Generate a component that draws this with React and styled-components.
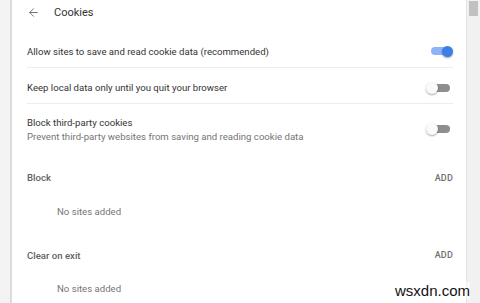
import styled, { createGlobalStyle } from "styled-components"
import { ArrowLeft } from "lucide-react"

const Global = createGlobalStyle`
  html, body { margin: 0; padding: 0; }
  *, *::before, *::after { box-sizing: border-box; }
  body {
    width: 480px;
    height: 303px;
    overflow: hidden;
    background: #f5f5f5;
    font-family: Roboto, "Liberation Sans", Arial, sans-serif;
  }
`

const Page = styled.div`
  position: relative;
  display: flex;
  width: 480px;
  height: 303px;
  overflow: hidden;
`

const Gutter = styled.div`
  width: 12px;
  flex: none;
  background: #f3f3f3;
  border-right: 2px solid #dcdcdc;
`

const Card = styled.div`
  flex: 1;
  background: #fff;
  padding: 0 13px 0 15px;
  display: flex;
  flex-direction: column;
`

const Scrollbar = styled.div`
  width: 14px;
  flex: none;
  background: #f1f1f1;
  border-left: 1px solid #e4e4e4;
  padding: 1px 2px 0 2px;
`

const Thumb = styled.div`
  height: 15px;
  background: #c1c1c1;
`

const Header = styled.div`
  height: 24px;
  padding-top: 2px;
  display: flex;
  align-items: center;
  gap: 14px;
  color: #333;
  font-size: 11px;
`

const Row = styled.div`
  height: ${({ h }) => h}px;
  margin-top: ${({ mt }) => mt || 0}px;
  padding-top: 4px;
  display: flex;
  align-items: center;
  justify-content: space-between;
  border-bottom: ${({ last }) => (last ? "none" : "1px solid #ececec")};
`

const Label = styled.div`
  display: flex;
  flex-direction: column;
  gap: 3px;
  font-size: 9.6px;
  color: #333;
`

const Sub = styled.span`
  color: #757575;
`

const Toggle = styled.div`
  position: relative;
  width: 19px;
  height: 8px;
  margin-right: 3px;
  border-radius: 4px;
  background: ${({ on }) => (on ? "#8fb4f5" : "#8e8e8e")};
  &::after {
    content: "";
    position: absolute;
    left: ${({ on }) => (on ? "11px" : "-5px")};
    width: ${({ on }) => (on ? "11px" : "12px")};
    height: ${({ on }) => (on ? "11px" : "12px")};
    top: ${({ on }) => (on ? "-1.5px" : "-2px")};
    border-radius: 50%;
    background: ${({ on }) => (on ? "#3d7ee8" : "#fafafa")};
    box-shadow: 0 1px 2px rgba(0, 0, 0, 0.35);
  }
`

const SectionHead = styled.div`
  height: 36px;
  margin-top: ${({ mt }) => mt}px;
  padding-top: 4px;
  display: flex;
  align-items: center;
  justify-content: space-between;
  font-size: 9.6px;
  font-weight: 500;
  color: #616161;
`

const Add = styled.span`
  font-size: 9px;
  font-weight: 500;
  color: #6f6f6f;
  letter-spacing: 0.2px;
`

const Empty = styled.div`
  height: 33px;
  padding-top: 4px;
  display: flex;
  align-items: center;
  padding-left: 30px;
  font-size: 9.6px;
  color: #757575;
`

const Watermark = styled.div`
  position: absolute;
  right: 10px;
  bottom: 4px;
  font-family: "Liberation Sans", Arial, sans-serif;
  font-size: 15px;
  color: #111;
  background: rgba(255, 255, 255, 0.6);
`

export default function App() {
  return (
    <Page>
      <Global />
      <Gutter />
      <Card>
        <Header>
          <ArrowLeft size={13} color="#555" strokeWidth={1.5} />
          Cookies
        </Header>
        <Row h={38} mt={8}>
          <Label>Allow sites to save and read cookie data (recommended)</Label>
          <Toggle on />
        </Row>
        <Row h={36}>
          <Label>Keep local data only until you quit your browser</Label>
          <Toggle />
        </Row>
        <Row h={48} last>
          <Label>
            Block third-party cookies
            <Sub>Prevent third-party websites from saving and reading cookie data</Sub>
          </Label>
          <Toggle />
        </Row>
        <SectionHead mt={8}>
          Block
          <Add>ADD</Add>
        </SectionHead>
        <Empty>No sites added</Empty>
        <SectionHead mt={10}>
          Clear on exit
          <Add>ADD</Add>
        </SectionHead>
        <Empty>No sites added</Empty>
      </Card>
      <Scrollbar>
        <Thumb />
      </Scrollbar>
      <Watermark>wsxdn.com</Watermark>
    </Page>
  )
}
